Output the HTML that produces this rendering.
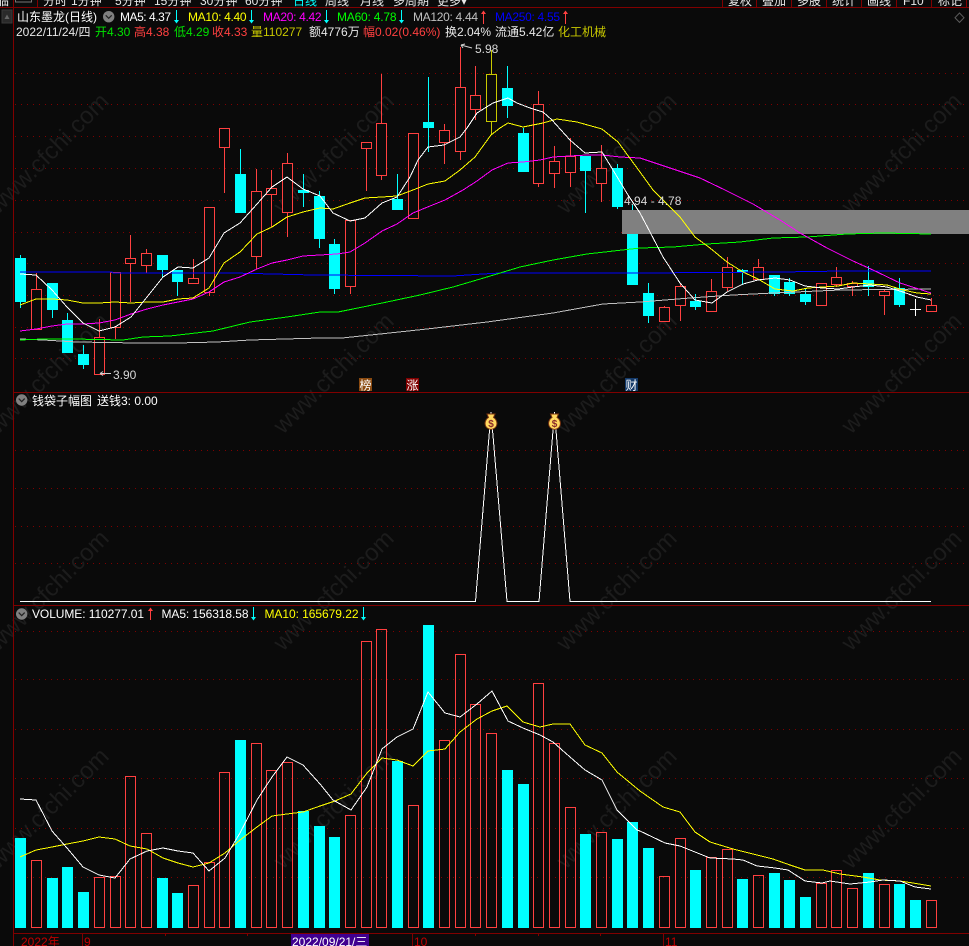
<!DOCTYPE html>
<html lang="zh">
<head>
<meta charset="utf-8">
<title>山东墨龙(日线)</title>
<style>
html,body{margin:0;padding:0;background:#0a0a0a;width:969px;height:946px;overflow:hidden}
svg{display:block;position:absolute;left:0;top:0}
text{font-family:"Liberation Sans","WenQuanYi Zen Hei","Noto Sans CJK SC",sans-serif;font-size:12px;white-space:pre}
.wm text{font-size:24px;fill:#1c1c1c}
.c{shape-rendering:crispEdges}
</style>
</head>
<body>
<svg width="969" height="946" viewBox="0 0 969 946" xmlns="http://www.w3.org/2000/svg">
<rect width="969" height="946" fill="#0a0a0a"/>

<!-- watermarks -->
<g class="wm">
<text transform="translate(-2 215) rotate(-45)">www.cfchi.com</text>
<text transform="translate(283 215) rotate(-45)">www.cfchi.com</text>
<text transform="translate(566 215) rotate(-45)">www.cfchi.com</text>
<text transform="translate(851 215) rotate(-45)">www.cfchi.com</text>
<text transform="translate(-2 435) rotate(-45)">www.cfchi.com</text>
<text transform="translate(283 435) rotate(-45)">www.cfchi.com</text>
<text transform="translate(566 435) rotate(-45)">www.cfchi.com</text>
<text transform="translate(851 435) rotate(-45)">www.cfchi.com</text>
<text transform="translate(-2 652) rotate(-45)">www.cfchi.com</text>
<text transform="translate(283 652) rotate(-45)">www.cfchi.com</text>
<text transform="translate(566 652) rotate(-45)">www.cfchi.com</text>
<text transform="translate(851 652) rotate(-45)">www.cfchi.com</text>
<text transform="translate(-2 870) rotate(-45)">www.cfchi.com</text>
<text transform="translate(283 870) rotate(-45)">www.cfchi.com</text>
<text transform="translate(566 870) rotate(-45)">www.cfchi.com</text>
<text transform="translate(851 870) rotate(-45)">www.cfchi.com</text>
</g>

<!-- grid -->
<path class="c" stroke="#800000" stroke-width="1" stroke-dasharray="1 5" fill="none" d="M15 73.5H969M15 104.5H969M15 136.5H969M15 168.5H969M15 200.5H969M15 232.5H969M15 263.5H969M15 295.5H969M15 327.5H969M15 358.5H969M15 450.5H969M15 488.5H969M15 526.5H969M15 563.5H969M15 631.5H969M15 679.5H969M15 729.5H969M15 778.5H969M15 828.5H969M15 877.5H969"/>

<!-- top toolbar -->
<rect class="c" x="2" y="10" width="10" height="13" fill="#2a2a2a" stroke="#3a3a3a"/>
<path d="M4.5 19L7 14.5 9.5 19Z" fill="#666"/>
<rect class="c" x="15.5" y="-6" width="16" height="8" fill="none" stroke="#777"/>
<g fill="#e8e8e8">
<text x="-3" y="5">临</text>
<text x="43" y="5">分时</text><text x="71" y="5">1分钟</text><text x="115" y="5">5分钟</text><text x="154" y="5">15分钟</text><text x="200" y="5">30分钟</text><text x="245" y="5">60分钟</text>
<text x="293" y="5" fill="#00ffff">日线</text><text x="325" y="5">周线</text><text x="360" y="5">月线</text><text x="393" y="5">多周期</text><text x="437" y="5">更多▾</text>
<text x="728" y="5">复权</text><text x="762" y="5">叠加</text><text x="797" y="5">多股</text><text x="832" y="5">统计</text><text x="867" y="5">画线</text><text x="903" y="5">F10</text><text x="938" y="5">标记</text>
</g>
<rect class="c" x="0" y="7" width="969" height="2" fill="#0a0a0a"/>

<!-- frame -->
<path class="c" stroke="#800000" stroke-width="1" fill="none" d="M13.5 0V946M0 7.5H969M14 392.5H969M14 605.5H969M14 933.5H969M37.5 0V7M722.5 0V7M756.5 0V7M791.5 0V7M826.5 0V7M861.5 0V7M896.5 0V7M931.5 0V7M966.5 0V7M82.5 934V946M412.5 934V946M663.5 934V946M165.5 933V936M247.5 933V936M475.5 933V936M538.5 933V936M600.5 933V936"/>

<!-- main volume-price candles : wicks -->
<path class="c" stroke="#ff4040" stroke-width="1" fill="none" d="M36.5 273V329M99.5 319V374M115.5 272V339M130.5 235V302M146.5 249V273M193.5 259V283M209.5 207V296M224.5 128V193M256.5 169V269M271.5 170V227M287.5 153V237M350.5 220V294M366.5 142V191M381.5 74V180M413.5 133V218M444.5 124V164M460.5 47V160M475.5 66V120M538.5 91V187M554.5 146V188M570.5 138V187M601.5 145V202M664.5 306V321M680.5 283V321M711.5 279V312M727.5 257V291M758.5 259V280M821.5 283V305M836.5 267V287M852.5 281V296M884.5 290V315M931.5 298V312"/>
<path class="c" stroke="#00ffff" stroke-width="1" fill="none" d="M20.5 255V308M52.5 283V318M67.5 313V353M83.5 345V369M162.5 255V278M177.5 270V296M240.5 149V213M303.5 174V207M319.5 191V248M334.5 239V294M397.5 174V210M428.5 77V152M507.5 66V118M523.5 128V172M585.5 156V213M617.5 164V209M632.5 205V285M648.5 283V323M695.5 294V310M742.5 269V285M774.5 275V296M789.5 278V296M805.5 289V305M868.5 266V296M899.5 278V307"/>
<path class="c" stroke="#c8c800" stroke-width="1" fill="none" d="M491.5 50V135"/>

<!-- cyan bodies -->
<g class="c" fill="#00ffff">
<rect x="15" y="258" width="11" height="44"/><rect x="47" y="283" width="11" height="27"/><rect x="62" y="320" width="11" height="33"/><rect x="78" y="354" width="11" height="11"/><rect x="157" y="255" width="11" height="15"/><rect x="172" y="270" width="11" height="12"/><rect x="235" y="174" width="11" height="39"/><rect x="298" y="190" width="11" height="3"/><rect x="314" y="196" width="11" height="43"/><rect x="329" y="244" width="11" height="45"/><rect x="392" y="199" width="11" height="11"/><rect x="423" y="122" width="11" height="6"/><rect x="502" y="88" width="11" height="18"/><rect x="518" y="133" width="11" height="39"/><rect x="580" y="156" width="11" height="15"/><rect x="612" y="168" width="11" height="39"/><rect x="627" y="210" width="11" height="75"/><rect x="643" y="293" width="11" height="23"/><rect x="690" y="301" width="11" height="6"/><rect x="737" y="270" width="11" height="2"/><rect x="769" y="275" width="11" height="19"/><rect x="784" y="282" width="11" height="12"/><rect x="800" y="294" width="11" height="8"/><rect x="863" y="280" width="11" height="7"/><rect x="894" y="288" width="11" height="17"/>
</g>
<!-- red bodies -->
<g class="c" fill="#0a0a0a" stroke="#ff4040" stroke-width="1">
<rect x="31.5" y="289.5" width="10" height="40"/><rect x="94.5" y="337.5" width="10" height="37"/><rect x="110.5" y="272.5" width="10" height="55"/><rect x="125.5" y="258.5" width="10" height="5"/><rect x="141.5" y="253.5" width="10" height="12"/><rect x="188.5" y="278.5" width="10" height="5"/><rect x="204.5" y="207.5" width="10" height="85"/><rect x="219.5" y="128.5" width="10" height="19"/><rect x="251.5" y="191.5" width="10" height="65"/><rect x="266.5" y="188.5" width="10" height="6"/><rect x="282.5" y="163.5" width="10" height="49"/><rect x="345.5" y="220.5" width="10" height="66"/><rect x="361.5" y="142.5" width="10" height="6"/><rect x="376.5" y="123.5" width="10" height="52"/><rect x="408.5" y="133.5" width="10" height="85"/><rect x="439.5" y="130.5" width="10" height="12"/><rect x="455.5" y="87.5" width="10" height="64"/><rect x="470.5" y="95.5" width="10" height="14"/><rect x="533.5" y="104.5" width="10" height="79"/><rect x="549.5" y="161.5" width="10" height="12"/><rect x="565.5" y="156.5" width="10" height="16"/><rect x="596.5" y="168.5" width="10" height="15"/><rect x="659.5" y="307.5" width="10" height="14"/><rect x="675.5" y="286.5" width="10" height="19"/><rect x="706.5" y="291.5" width="10" height="20"/><rect x="722.5" y="267.5" width="10" height="20"/><rect x="753.5" y="267.5" width="10" height="12"/><rect x="816.5" y="283.5" width="10" height="22"/><rect x="831.5" y="277.5" width="10" height="7"/><rect x="847.5" y="283.5" width="10" height="3"/><rect x="879.5" y="291.5" width="10" height="4"/><rect x="926.5" y="305.5" width="10" height="6"/>
</g>
<rect class="c" x="486.5" y="74.5" width="10" height="47" fill="#0a0a0a" stroke="#c8c800"/>

<!-- gray band -->
<rect class="c" x="622" y="210" width="347" height="24" fill="#808080"/>

<!-- MA lines main -->
<g class="c" fill="none" stroke-width="1">
<polyline stroke="#0000ff" points="20,272 112,272 113,273 233,273 313,275 453,276 483,274 500,273 640,273 780,272 843,271 931,271"/>
<polyline stroke="#c0c0c0" points="20,339 43,340 77,342 137,343 177,343 217,342 250,340 320,338 342,338 380,334 427,329 487,322 553,313 603,304 640,302 690,298 733,295 773,293 840,290 931,289"/>
<polyline stroke="#00ff00" points="20,340 43,339 73,339 123,340 143,337 170,336 213,331 250,322 287,317 320,312 338,312 353,309 387,302 420,295 453,287 487,277 520,267 553,260 587,254 640,248 673,247 707,244 740,242 773,238 807,237 847,234 883,233 931,234"/>
<polyline stroke="#ff00ff" points="20,331 36,329 52,326 67,324 83,324 99,323 115,320 131,314 147,309 163,305 178,302 193,299 209,292 224,282 240,277 257,269 272,263 287,260 303,256 320,255 337,254 350,252 365,243 382,231 397,224 413,213 430,206 445,200 463,190 477,181 492,170 508,163 523,162 540,160 553,157 570,156 587,155 603,155 620,157 640,158 670,168 700,178 725,190 753,204 780,220 800,233 827,248 853,261 873,270 900,283 931,293"/>
<polyline stroke="#ffff00" points="20,305 36,299 52,299 67,300 83,303 99,303 115,302 131,303 147,302 163,302 178,299 193,298 209,288 224,263 240,252 257,234 272,227 287,217 303,212 320,208 333,209 350,203 365,198 382,197 397,196 413,190 428,184 445,181 460,170 475,157 491,135 500,128 508,123 523,127 543,123 557,119 577,122 602,129 618,142 640,172 653,190 680,217 695,237 710,248 727,262 743,272 758,279 775,289 793,291 808,288 823,287 838,286 853,283 870,284 887,285 903,290 917,293 931,294"/>
<polyline stroke="#ffffff" points="20,274 36,275 52,290 67,307 83,323 99,331 115,327 131,317 147,297 163,277 178,267 193,268 209,258 224,233 240,223 257,204 272,187 287,177 303,189 320,196 333,213 350,221 365,218 382,203 397,197 410,177 418,160 428,147 444,145 460,137 467,128 477,113 493,103 508,98 517,103 530,108 543,112 552,120 570,140 585,153 602,152 613,170 628,195 640,213 650,232 663,257 680,283 695,300 712,303 727,292 743,284 758,280 775,278 790,280 805,286 822,288 838,289 853,287 870,285 887,287 903,292 917,297 931,300"/>
</g>

<!-- cross cursor -->
<path class="c" stroke="#ffffff" stroke-width="1" fill="none" d="M915.5 299V316M910 309.5H921"/>

<!-- annotations -->
<path stroke="#d0d0d0" stroke-width="1" fill="none" d="M461 45L472 48M461 45L465 44M461 45L463 48"/>
<text x="475" y="53" fill="#d8d8d8">5.98</text>
<path stroke="#d0d0d0" stroke-width="1" fill="none" d="M100 373.5H111M100 373.5L103 371.5M100 373.5L103 375.5"/>
<text x="113" y="379" fill="#d8d8d8">3.90</text>
<text x="624" y="205" fill="#d8d8d8">4.94 - 4.78</text>

<!-- event tags -->
<rect class="c" x="359" y="378" width="13" height="13" fill="#8a4a10"/><text x="359.5" y="389.5" fill="#fff">榜</text>
<rect class="c" x="406" y="378" width="13" height="13" fill="#800000"/><text x="406.5" y="389.5" fill="#fff">涨</text>
<rect class="c" x="625" y="378" width="13" height="13" fill="#143a6a"/><text x="625.5" y="389.5" fill="#fff">财</text>

<!-- header row 1 -->
<text x="17" y="21" fill="#ffffff">山东墨龙(日线)</text>
<circle cx="108.7" cy="16.7" r="5.7" fill="#808080"/><path d="M105.7 15.3L108.7 18.3 111.7 15.3" stroke="#222" stroke-width="1.2" fill="none"/>
<text x="120" y="21" fill="#ffffff" textLength="51" lengthAdjust="spacing">MA5: 4.37</text>
<path class="c" d="M176.5 10V20" stroke="#00ffff"/><path d="M174 20H179L176.5 23.5Z" fill="#00ffff"/>
<text x="188" y="21" fill="#ffff00" textLength="58.5" lengthAdjust="spacing">MA10: 4.40</text>
<path class="c" d="M251.5 10V20" stroke="#00ffff"/><path d="M249 20H254L251.5 23.5Z" fill="#00ffff"/>
<text x="263" y="21" fill="#ff00ff" textLength="58.5" lengthAdjust="spacing">MA20: 4.42</text>
<path class="c" d="M326.5 10V20" stroke="#00ffff"/><path d="M324 20H329L326.5 23.5Z" fill="#00ffff"/>
<text x="337" y="21" fill="#00ff00" textLength="59.5" lengthAdjust="spacing">MA60: 4.78</text>
<path class="c" d="M401.5 10V20" stroke="#00ffff"/><path d="M399 20H404L401.5 23.5Z" fill="#00ffff"/>
<text x="413" y="21" fill="#c0c0c0" textLength="65" lengthAdjust="spacing">MA120: 4.44</text>
<path class="c" d="M483.5 13V24" stroke="#ff4040"/><path d="M481 14H486L483.5 10.5Z" fill="#ff4040"/>
<text x="495" y="21" fill="#0000ff" textLength="65" lengthAdjust="spacing">MA250: 4.55</text>
<path class="c" d="M565.5 13V24" stroke="#ff4040"/><path d="M563 14H568L565.5 10.5Z" fill="#ff4040"/>
<path d="M959.5 13L964 17.7 959.5 22.4 955 17.7Z" fill="none" stroke="#5c5c5c"/>

<!-- header row 2 -->
<text x="16" y="36" fill="#e8e8e8">2022/11/24/四</text>
<text x="95" y="36" fill="#00e000">开4.30</text>
<text x="134" y="36" fill="#ff4040">高4.38</text>
<text x="174" y="36" fill="#00e000">低4.29</text>
<text x="212" y="36" fill="#ff4040">收4.33</text>
<text x="251" y="36" fill="#c8c800">量110277</text>
<text x="309" y="36" fill="#e8e8e8">额4776万</text>
<text x="363" y="36" fill="#ff4040">幅0.02(0.46%)</text>
<text x="445" y="36" fill="#e8e8e8">换2.04%</text>
<text x="495" y="36" fill="#e8e8e8">流通5.42亿</text>
<text x="558" y="36" fill="#c8c800">化工机械</text>

<!-- panel 2 -->
<circle cx="21.7" cy="400" r="5.7" fill="#808080"/><path d="M18.7 398.6L21.7 401.6 24.7 398.6" stroke="#222" stroke-width="1.2" fill="none"/>
<text x="32" y="405" fill="#ffffff">钱袋子幅图</text>
<text x="97" y="405" fill="#ffffff">送钱3: 0.00</text>
<polyline fill="none" stroke="#ffffff" stroke-width="1" class="c" points="20,601.5 475.5,601.5 491,412 507,601.5 539,601.5 554.5,412 570,601.5 931,601.5"/>

<!-- money bags -->
<g>
<path d="M487 414H495L493.5 417.5C498 420 499 428 491 429.5 483 428 484 420 488.5 417.5Z" fill="#ffd860" stroke="#7a3410" stroke-width="1"/>
<text x="491" y="427" text-anchor="middle" fill="#8a2a2a" style="font-size:10px;font-weight:bold">$</text>
<path d="M550.5 414H558.5L557 417.5C561.5 420 562.5 428 554.5 429.5 546.5 428 547.5 420 552 417.5Z" fill="#ffd860" stroke="#7a3410" stroke-width="1"/>
<text x="554.5" y="427" text-anchor="middle" fill="#8a2a2a" style="font-size:10px;font-weight:bold">$</text>
</g>

<!-- panel 3 header -->
<circle cx="21.7" cy="614" r="5.7" fill="#808080"/><path d="M18.7 612.6L21.7 615.6 24.7 612.6" stroke="#222" stroke-width="1.2" fill="none"/>
<text x="32" y="618" fill="#ffffff" textLength="112" lengthAdjust="spacing">VOLUME: 110277.01</text>
<path class="c" d="M150.5 610V620" stroke="#ff4040"/><path d="M148 611H153L150.5 607.5Z" fill="#ff4040"/>
<text x="161.5" y="618" fill="#ffffff" textLength="87" lengthAdjust="spacing">MA5: 156318.58</text>
<path class="c" d="M253.5 607V617" stroke="#00ffff"/><path d="M251 617H256L253.5 620.5Z" fill="#00ffff"/>
<text x="264.5" y="618" fill="#ffff00" textLength="94" lengthAdjust="spacing">MA10: 165679.22</text>
<path class="c" d="M363.5 607V617" stroke="#00ffff"/><path d="M361 617H366L363.5 620.5Z" fill="#00ffff"/>

<!-- volume cyan -->
<g class="c" fill="#00ffff">
<rect x="15" y="838" width="11" height="90"/><rect x="47" y="878" width="11" height="50"/><rect x="62" y="867" width="11" height="61"/><rect x="78" y="892" width="11" height="36"/><rect x="157" y="878" width="11" height="50"/><rect x="172" y="893" width="11" height="35"/><rect x="235" y="740" width="11" height="188"/><rect x="298" y="811" width="11" height="117"/><rect x="314" y="826" width="11" height="102"/><rect x="329" y="837" width="11" height="91"/><rect x="392" y="761" width="11" height="167"/><rect x="423" y="625" width="11" height="303"/><rect x="502" y="770" width="11" height="158"/><rect x="518" y="784" width="11" height="144"/><rect x="580" y="834" width="11" height="94"/><rect x="612" y="839" width="11" height="89"/><rect x="627" y="822" width="11" height="106"/><rect x="643" y="848" width="11" height="80"/><rect x="690" y="870" width="11" height="58"/><rect x="737" y="879" width="11" height="49"/><rect x="769" y="873" width="11" height="55"/><rect x="784" y="880" width="11" height="48"/><rect x="800" y="897" width="11" height="31"/><rect x="863" y="873" width="11" height="55"/><rect x="894" y="884" width="11" height="44"/><rect x="910" y="900" width="11" height="28"/>
</g>
<!-- volume red -->
<g class="c" fill="none" stroke="#ff4040" stroke-width="1">
<rect x="31.5" y="860.5" width="10" height="67"/><rect x="94.5" y="877.5" width="10" height="50"/><rect x="110.5" y="876.5" width="10" height="51"/><rect x="125.5" y="776.5" width="10" height="151"/><rect x="141.5" y="833.5" width="10" height="94"/><rect x="188.5" y="885.5" width="10" height="42"/><rect x="204.5" y="862.5" width="10" height="65"/><rect x="219.5" y="772.5" width="10" height="155"/><rect x="251.5" y="743.5" width="10" height="184"/><rect x="266.5" y="770.5" width="10" height="157"/><rect x="282.5" y="762.5" width="10" height="165"/><rect x="345.5" y="815.5" width="10" height="112"/><rect x="361.5" y="641.5" width="10" height="286"/><rect x="376.5" y="629.5" width="10" height="298"/><rect x="408.5" y="805.5" width="10" height="122"/><rect x="439.5" y="740.5" width="10" height="187"/><rect x="455.5" y="654.5" width="10" height="273"/><rect x="470.5" y="704.5" width="10" height="223"/><rect x="486.5" y="733.5" width="10" height="194"/><rect x="533.5" y="683.5" width="10" height="244"/><rect x="549.5" y="743.5" width="10" height="184"/><rect x="565.5" y="807.5" width="10" height="120"/><rect x="596.5" y="832.5" width="10" height="95"/><rect x="659.5" y="876.5" width="10" height="51"/><rect x="675.5" y="838.5" width="10" height="89"/><rect x="706.5" y="857.5" width="10" height="70"/><rect x="722.5" y="849.5" width="10" height="78"/><rect x="753.5" y="875.5" width="10" height="52"/><rect x="816.5" y="883.5" width="10" height="44"/><rect x="831.5" y="870.5" width="10" height="57"/><rect x="847.5" y="888.5" width="10" height="39"/><rect x="879.5" y="884.5" width="10" height="43"/><rect x="926.5" y="900.5" width="10" height="27"/>
</g>

<!-- volume MAs -->
<g class="c" fill="none" stroke-width="1">
<polyline stroke="#ffff00" points="20,857 36,850 52,847 67,844 83,841 99,837 115,839 130,846 147,849 163,858 178,863 193,867 209,863 225,853 240,840 257,827 272,816 287,814 303,812 320,806 335,801 351,794 367,773 382,758 397,760 413,766 428,751 445,749 460,732 477,719 492,711 507,706 523,722 540,727 553,724 570,724 585,745 602,753 617,772 640,791 663,807 680,812 695,832 710,842 733,849 753,854 773,859 790,865 805,870 823,870 840,874 863,877 880,880 900,881 913,883 931,886"/>
<polyline stroke="#ffffff" points="20,799 36,800 52,831 67,848 83,867 99,875 115,878 130,859 147,851 163,848 178,851 193,853 209,871 225,858 240,833 257,800 272,777 287,757 303,765 320,784 333,800 351,810 367,787 382,749 397,737 413,729 428,692 445,713 460,717 477,704 492,691 508,721 523,728 540,735 553,742 570,757 585,770 602,780 617,810 637,830 640,831 665,843 680,846 695,852 710,858 733,859 743,860 757,866 775,868 788,870 805,881 822,883 830,881 850,884 870,882 883,880 900,881 915,887 931,889"/>
</g>

<!-- bottom axis -->
<text x="21" y="946" fill="#c00000">2022年</text>
<text x="84" y="946" fill="#c00000">9</text>
<rect class="c" x="291" y="934" width="78" height="12" fill="#400090"/>
<text x="292" y="946" fill="#ffffff">2022/09/21/三</text>
<text x="414" y="946" fill="#c00000">10</text>
<text x="665" y="946" fill="#c00000">11</text>
</svg>
</body>
</html>
